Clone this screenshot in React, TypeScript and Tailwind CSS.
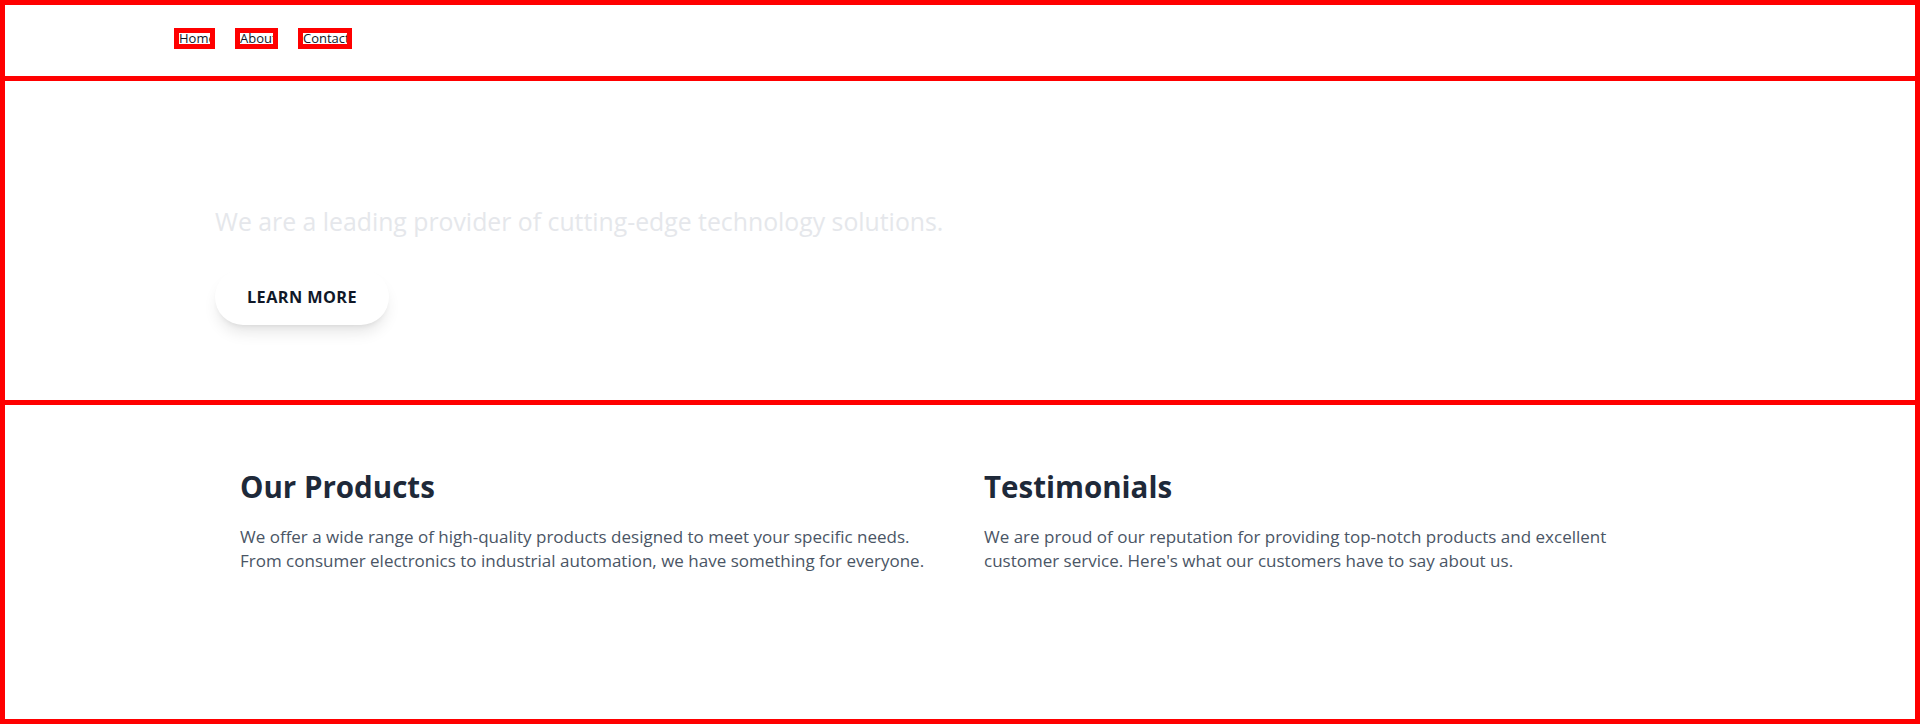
import React from "react";

const font = { fontFamily: '"Open Sans", "Noto Sans", Arial, sans-serif' };

function NavBox({ label, w }: { label: string; w: string }) {
  return (
    <a
      href="#"
      className={`block h-[21px] ${w} overflow-hidden border-[5px] border-[#ff0000] text-[13px] leading-[11px] text-gray-900 whitespace-nowrap`}
    >
      {label}
    </a>
  );
}

export default function App() {
  return (
    <div
      className="flex h-[724px] flex-col divide-y-[5px] divide-[#ff0000] border-[5px] border-[#ff0000] bg-white"
      style={font}
    >
      <header className="h-[76px] shrink-0 pl-[169px] pt-[23px]">
        <nav className="flex gap-5">
          <NavBox label="Home" w="w-[41px]" />
          <NavBox label="About" w="w-[43px]" />
          <NavBox label="Contact" w="w-[54px]" />
        </nav>
      </header>

      <section className="h-[324px] shrink-0 pl-[210px] pt-[124px]">
        <p className="text-[24.8px] leading-8 text-gray-200">
          We are a leading provider of cutting-edge technology solutions.
        </p>
        <button className="mt-8 rounded-full bg-white px-8 py-4 text-[16.3px] leading-6 font-bold uppercase tracking-wide text-gray-900 shadow-lg">
          Learn More
        </button>
      </section>

      <section className="grid flex-1 grid-cols-2 gap-12 px-[235px] pt-16">
        <div>
          <h2 className="mb-5 text-[29.5px] leading-9 font-bold text-gray-800">Our Products</h2>
          <p className="text-[17px] leading-6 text-gray-600">
            We offer a wide range of high-quality products designed to meet your specific needs.
            From consumer electronics to industrial automation, we have something for everyone.
          </p>
        </div>
        <div>
          <h2 className="mb-5 text-[29.5px] leading-9 font-bold text-gray-800">Testimonials</h2>
          <p className="text-[17px] leading-6 text-gray-600">
            We are proud of our reputation for providing top-notch products and excellent
            customer service. Here's what our customers have to say about us.
          </p>
        </div>
      </section>
    </div>
  );
}
